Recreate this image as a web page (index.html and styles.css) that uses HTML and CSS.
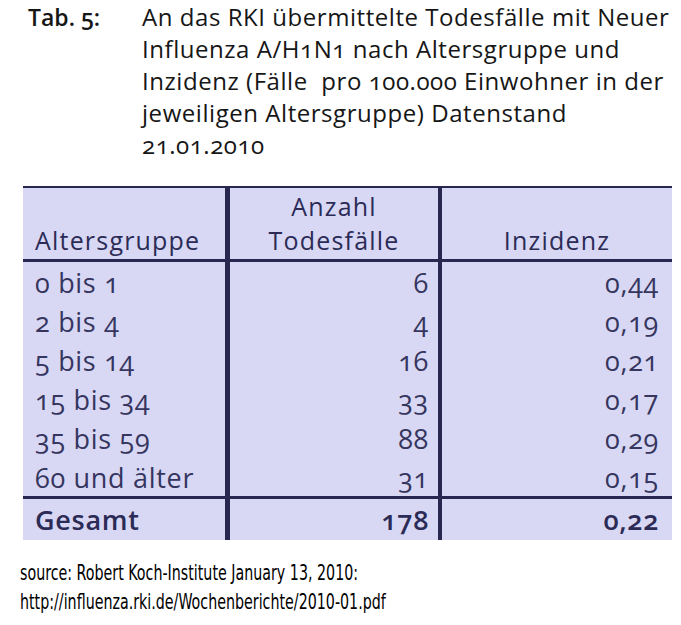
FILE: index.html
```html
<!DOCTYPE html>
<html lang="de">
<head>
<meta charset="utf-8">
<title>Tab. 5</title>
<link rel="stylesheet" href="styles.css">
</head>
<body>
<div class="page">
  <div class="caption">
    <div class="caption-label">Tab. 5:</div>
    <div class="caption-text">An das RKI übermittelte Todesfälle mit Neuer<br>Influenza A/H1N1 nach Altersgruppe und<br>Inzidenz (Fälle&nbsp; pro 100.000 Einwohner in der<br>jeweiligen Altersgruppe) Datenstand<br>21.01.2010</div>
  </div>
  <table class="data">
    <colgroup>
      <col class="c1">
      <col class="c2">
      <col class="c3">
    </colgroup>
    <thead>
      <tr>
        <th class="left">Altersgruppe</th>
        <th class="mid">Anzahl<br>Todesfälle</th>
        <th class="mid">Inzidenz</th>
      </tr>
    </thead>
    <tbody>
      <tr><td class="left">0 bis 1</td><td class="num">6</td><td class="num">0,44</td></tr>
      <tr><td class="left">2 bis 4</td><td class="num">4</td><td class="num">0,19</td></tr>
      <tr><td class="left">5 bis 14</td><td class="num">16</td><td class="num">0,21</td></tr>
      <tr><td class="left">15 bis 34</td><td class="num">33</td><td class="num">0,17</td></tr>
      <tr><td class="left">35 bis 59</td><td class="num">88</td><td class="num">0,29</td></tr>
      <tr><td class="left">60 und älter</td><td class="num">31</td><td class="num">0,15</td></tr>
    </tbody>
    <tfoot>
      <tr><td class="left">Gesamt</td><td class="num">178</td><td class="num">0,22</td></tr>
    </tfoot>
  </table>
  <div class="source">
    <div class="source-line">source: Robert Koch-Institute January 13, 2010:</div>
    <div class="source-line">http://influenza.rki.de/Wochenberichte/2010-01.pdf</div>
  </div>
</div>
</body>
</html>
```
FILE: styles.css
```css
html, body {
  margin: 0;
  padding: 0;
  background: #ffffff;
}

.page {
  width: 681px;
  height: 625px;
  overflow: hidden;
  font-family: "Open Sans", "DejaVu Sans", sans-serif;
  font-variant-numeric: oldstyle-nums;
}

.caption {
  display: flex;
  padding-top: 1px;
  color: #161616;
  font-size: 24px;
  line-height: 32px;
  letter-spacing: 0.55px;
}

.caption-label {
  width: 114px;
  padding-left: 28px;
  font-weight: 600;
  letter-spacing: 0;
  font-size: 23px;
}

.caption-text {
  white-space: nowrap;
}

.data {
  margin-top: 25px;
  margin-left: 23px;
  width: 649px;
  table-layout: fixed;
  border-collapse: separate;
  border-spacing: 0;
  background: #d8d8f5;
  border-top: 2px solid #27274f;
  color: #35355e;
  font-size: 27px;
  letter-spacing: 0.7px;
}

.c1 { width: 207px; }
.c2 { width: 212px; }
.c3 { width: 230px; }

.data th,
.data td {
  box-sizing: border-box;
  padding: 0;
}

.data th:nth-child(1),
.data td:nth-child(1) {
  border-right: 5px solid #27274f;
}

.data th:nth-child(2),
.data td:nth-child(2) {
  border-right: 4px solid #27274f;
}

.data th {
  height: 74px;
  vertical-align: bottom;
  font-weight: 400;
  font-size: 25px;
  letter-spacing: 1.2px;
  line-height: 34px;
  color: #2b2b55;
  border-bottom: 3px solid #27274f;
  padding-bottom: 2px;
}

.data tbody td {
  height: 39px;
  line-height: 37px;
  padding-top: 2px;
}

.data tfoot td {
  height: 44px;
  border-top: 3px solid #27274f;
  font-weight: 600;
  line-height: 39px;
  color: #2b2b55;
}

.left {
  text-align: left;
  padding-left: 12px !important;
}

.mid {
  text-align: center;
}

.num {
  text-align: right;
  padding-right: 9px !important;
}

.data td:nth-child(3).num {
  padding-right: 13px !important;
}

.source {
  margin-top: 18px;
  padding-left: 20px;
  font-family: "Liberation Sans Narrow", "DejaVu Sans Condensed", "DejaVu Sans", sans-serif;
  font-stretch: condensed;
  font-size: 22px;
  line-height: 29px;
  color: #000000;
}

.source-line {
  white-space: nowrap;
  transform: scaleX(0.72);
  transform-origin: left center;
}
```
